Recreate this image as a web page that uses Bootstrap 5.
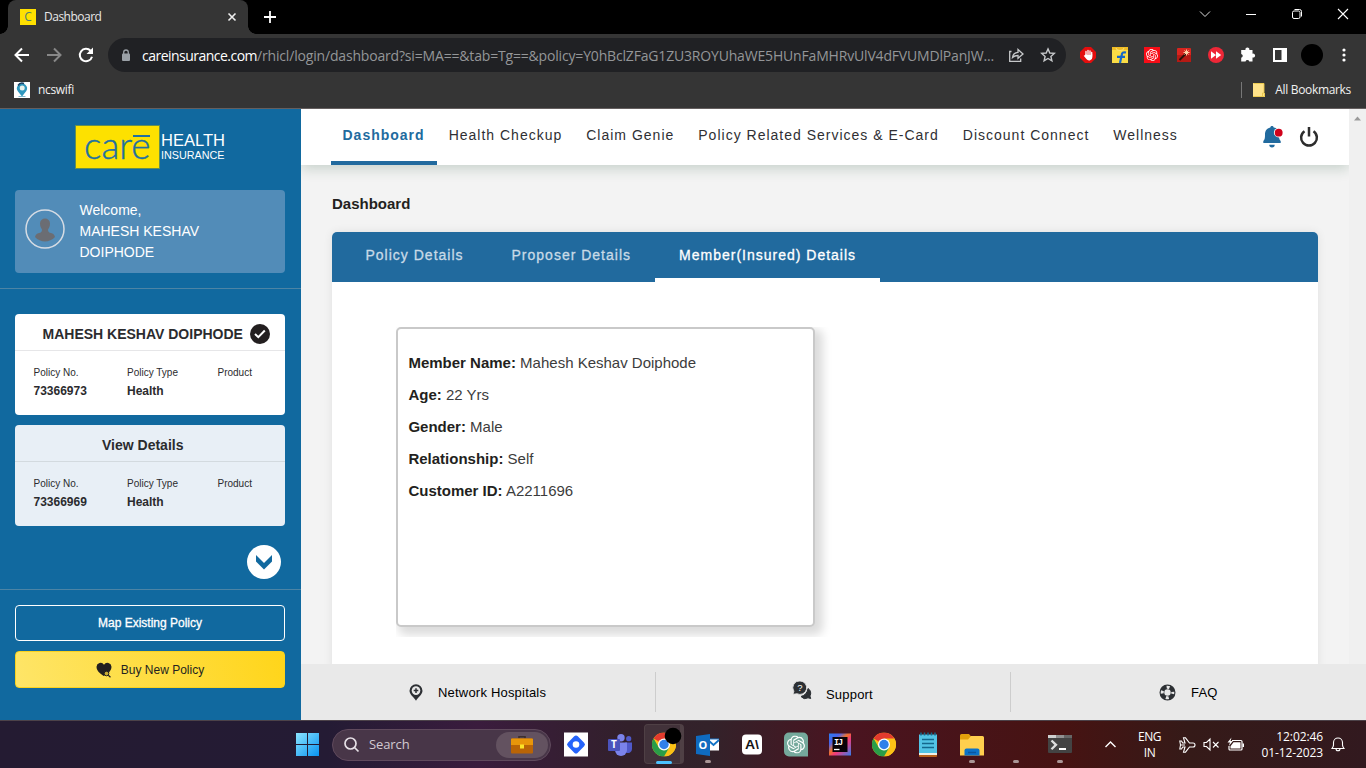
<!DOCTYPE html>
<html lang="en">
<head>
<meta charset="utf-8">
<meta name="viewport" content="width=device-width, initial-scale=1">
<title>Dashboard</title>
<link href="https://cdn.jsdelivr.net/npm/bootstrap@5.3.0/dist/css/bootstrap.min.css" rel="stylesheet">
<style>
  :root { --care-blue:#11699f; --care-nav:#216a9e; --ui:"Open Sans","Noto Sans",sans-serif; --web:"Liberation Sans",Arial,sans-serif; }
  body { height:768px; width:1366px; overflow:hidden; font-family:var(--web); font-size:14px; color:#231f20; white-space:nowrap; }
  svg { display:block; flex:none; overflow:visible; }
  .ui-font { font-family:var(--ui); }

  /* browser chrome */
  .tabstrip { height:34px; background:#000; padding-left:8px; }
  .browser-tab { width:240px; background:#353535; border-radius:8px 8px 0 0; padding:0 11px 0 12px; color:#e8e8e8; font-size:12px; letter-spacing:-.5px; position:relative; }
  .browser-tab::before, .browser-tab::after { content:""; position:absolute; bottom:0; width:8px; height:8px; }
  .browser-tab::before { left:-8px; background:radial-gradient(circle at 0 0,#000 7.5px,#353535 8px); }
  .browser-tab::after { right:-8px; background:radial-gradient(circle at 100% 0,#000 7.5px,#353535 8px); }
  .toolbar { height:42px; background:#353535; padding:4px 11px 4px 14px; }
  .omnibox { width:958px; height:34px; border-radius:17px; background:#202124; padding:0 11px 0 13px; margin-left:14px; font-size:14px; color:#949698; }
  .omnibox .host { color:#fff; letter-spacing:-.52px; }
  .omnibox .path { letter-spacing:-.175px; }
  .bookmarks { height:33px; background:#353535; border-bottom:1px solid #655f5f; color:#f1f1f1; font-size:12px; padding:0 15px 4px 14px; letter-spacing:-.33px; }

  /* page */
  .page { height:611px; }
  .side { width:301px; background:var(--care-blue); color:#fff; }
  .side-pad { padding:0 16px 0 15px; }
  .logo-wrap { padding:16px 0 22px 75px; }
  .welcome { height:83px; border-radius:4px; background:#528cb8; padding-left:10px; line-height:21px; gap:14.5px; }
  .rule { height:1px; background:#4c84a5; }
  .policy { height:101px; border-radius:4px; background:#fff; color:#2b2b2e; }
  .policy.alt { background:#e8eff6; }
  .policy-head { height:37px; border-bottom:1px solid #e6e6e8; font-weight:700; padding-top:3px; }
  .policy-head span { padding-top:1px; }
  .alt .policy-head { border-color:#d3dadf; }
  .policy-body { padding:14px 0 0 18.5px; font-size:10px; line-height:15px; }
  .policy-body b { display:block; font-size:12px; line-height:23px; }
  .c1 { width:93.5px; } .c2 { width:90.5px; }
  .side-btn { height:36px; border:1px solid #fff; border-radius:4px; font-size:12px; color:#fff; }
  .map-btn { -webkit-text-stroke:.3px #fff; }
  .buy-btn { height:37px; border-color:#fbd21c; background:linear-gradient(75deg,#fee568,#ffd51a); color:#231f20; gap:9px; }

  .content-col { width:1065px; background:#f3f3f3; }
  .view { height:555px; }
  .scroller { width:1048px; overflow:hidden; }
  .sbar { width:17px; background:#f0f0f0; padding-top:7px; }
  .topnav { height:56px; background:#fff; box-shadow:0 4px 12px rgba(30,80,50,.2); padding:0 30px 0 29.5px; letter-spacing:1px; position:relative; clip-path:inset(0 0 -20px 0); }
  .topnav .top-link { color:#2f2f33; text-decoration:none; padding:15px 12px 0 12px; line-height:22px; height:56px; }
  .topnav .top-link.on { color:var(--care-nav); font-weight:700; border-bottom:4px solid var(--care-nav); }
  .page-title { font-size:15px; font-weight:700; line-height:22px; margin:28px 0 17px 31px; }
  .panel { width:986px; margin-left:31px; height:440px; background:#fff; border-radius:5px 5px 0 0; box-shadow:0 0 10px rgba(0,0,0,.08); }
  .panel-tabs { height:50px; background:var(--care-nav); border-radius:5px 5px 0 0; padding-left:9.5px; letter-spacing:1px; }
  .panel-tabs .tab-link { color:#c8dae7; text-decoration:none; padding:11px 24px 0; line-height:24px; height:50px; -webkit-text-stroke:.3px currentColor; }
  .panel-tabs .tab-link.on { color:#fff; border-bottom:4px solid #fff; }
  .member-wrap { margin:45px 0 0 64px; width:440px; height:310px; overflow:hidden; }
  .member { width:419px; height:300px; border:2px solid #c9c9c9; border-radius:5px; box-shadow:5px 5px 10px 3px #dcdcdc; background:#fff; padding:18px 10.4px; font-size:15px; line-height:32px; color:#3c3c3c; }
  .member b { color:#231f20; }
  .foot { height:56px; background:#e9e9e9; color:#000; font-size:13px; letter-spacing:.2px; }
  .foot span { padding-top:1px; }
  .foot > div { width:355px; height:40px; }
  .foot > div:first-child { width:354px; }
  .foot > div + div { border-left:1px solid #cdcdcd; }

  /* desktop taskbar */
  .taskbar { height:48px; border-top:1px solid #4c4249; background:linear-gradient(90deg,#241b32 0,#241b34 24%,#3a1c3d 35%,#32202b 46%,#33222a 52%,#4a1420 62%,#461312 78%,#351a18 87%,#32191f 100%); color:#fff; padding-left:295px; }
  .search { width:219px; height:32px; border-radius:16px; background:#483648; border:1px solid #604a5d; color:#d2cad2; font-size:13px; padding-left:11px; margin:0 3px 0 12px; letter-spacing:-.1px; }
  .search-art { width:52px; height:26px; border-radius:13px; background:#635260; margin-right:2px; }
  .slot { width:44px; height:47px; position:relative; }
  .slot.dot::after { content:""; position:absolute; left:19px; bottom:5px; width:6px; height:3px; border-radius:2px; background:#aa9696; }
  .slot.active::before { content:""; position:absolute; left:2px; top:3px; width:40px; height:40px; border-radius:4px; background:#42323a; border:1px solid #4f4045; border-right-width:4px; }
  .slot.active::after { content:""; position:absolute; left:14px; bottom:4px; width:16px; height:3px; border-radius:2px; background:#4cc2ff; }
  .slot svg { position:relative; }
  .tray { font-size:12px; line-height:16px; letter-spacing:-.1px; }
</style>
</head>
<body class="d-flex flex-column m-0">

<svg width="0" height="0" class="position-absolute" aria-hidden="true">
  <symbol id="chrome" viewBox="0 0 24 24">
    <circle cx="12" cy="12" r="12" fill="#fbc116"/>
    <path d="M12 12 1.6 6A12 12 0 0 1 22.4 6z" fill="#e33b2e"/>
    <path d="M22.4 6A12 12 0 0 1 12 24l5.2-9L12 6z" fill="#fbc116"/>
    <path d="M1.6 6A12 12 0 0 0 12 24l5.2-9L12 12 6.8 15z" fill="#2a9d48"/>
    <circle cx="12" cy="12" r="6" fill="#fff"/><circle cx="12" cy="12" r="4.7" fill="#3080ea"/>
  </symbol>
  <symbol id="knot" viewBox="0 0 24 24">
    <path d="M22.2819 9.8211a5.9847 5.9847 0 0 0-.5157-4.9108 6.0462 6.0462 0 0 0-6.5098-2.9A6.0651 6.0651 0 0 0 4.9807 4.1818a5.9847 5.9847 0 0 0-3.9977 2.9 6.0462 6.0462 0 0 0 .7427 7.0966 5.98 5.98 0 0 0 .511 4.9107 6.051 6.051 0 0 0 6.5146 2.9001A5.9847 5.9847 0 0 0 13.2599 24a6.0557 6.0557 0 0 0 5.7718-4.2058 5.9894 5.9894 0 0 0 3.9977-2.9001 6.0557 6.0557 0 0 0-.7475-7.0729zm-9.022 12.6081a4.4755 4.4755 0 0 1-2.8764-1.0408l.1419-.0804 4.7783-2.7582a.7948.7948 0 0 0 .3927-.6813v-6.7369l2.02 1.1686a.071.071 0 0 1 .038.052v5.5826a4.504 4.504 0 0 1-4.4945 4.4944zm-9.6607-4.1254a4.4708 4.4708 0 0 1-.5346-3.0137l.142.0852 4.783 2.7582a.7712.7712 0 0 0 .7806 0l5.8428-3.3685v2.3324a.0804.0804 0 0 1-.0332.0615L9.74 19.9502a4.4992 4.4992 0 0 1-6.1408-1.6464zM2.3408 7.8956a4.485 4.485 0 0 1 2.3655-1.9728V11.6a.7664.7664 0 0 0 .3879.6765l5.8144 3.3543-2.0201 1.1685a.0757.0757 0 0 1-.071 0l-4.8303-2.7865A4.504 4.504 0 0 1 2.3408 7.872zm16.5963 3.8558L13.1038 8.364 15.1192 7.2a.0757.0757 0 0 1 .071 0l4.8303 2.7913a4.4944 4.4944 0 0 1-.6765 8.1042v-5.6772a.79.79 0 0 0-.407-.667zm2.0107-3.0231l-.142-.0852-4.7735-2.7818a.7759.7759 0 0 0-.7854 0L9.409 9.2297V6.8974a.0662.0662 0 0 1 .0284-.0615l4.8303-2.7866a4.4992 4.4992 0 0 1 6.6802 4.66zM8.3065 12.863l-2.02-1.1638a.0804.0804 0 0 1-.038-.0567V6.0742a4.4992 4.4992 0 0 1 7.3757-3.4537l-.142.0805L8.704 5.459a.7948.7948 0 0 0-.3927.6813zm1.0976-2.3654l2.602-1.4998 2.6069 1.4998v2.9994l-2.5974 1.4997-2.6067-1.4997Z"/>
  </symbol>
</svg>

<!-- Browser window -->
<div class="ui-font">
  <div class="tabstrip d-flex">
    <div class="browser-tab d-flex align-items-center">
      <svg width="16" height="16"><rect width="16" height="16" fill="#ffe000"/><text x="8" y="12.3" text-anchor="middle" font-size="12" letter-spacing="0" fill="#4f7d72" font-family="Open Sans">C</text></svg>
      <span class="ms-2">Dashboard</span>
      <svg class="ms-auto" width="10" height="10" stroke="#eee" stroke-width="1.6"><path d="M1.5 1.5l7 7M8.500 1.500l-7 7"/></svg>
    </div>
    <svg width="12" height="12" style="margin:11px 0 0 16px" stroke="#fff" stroke-width="1.8"><path d="M6 0v12M0 6h12"/></svg>
    <div class="ms-auto d-flex align-items-center" style="gap:36px;padding:0 18px 6px 0">
      <svg width="10" height="10" fill="none" stroke="#ddd"><path d="M0 2.500l5 5 5-5"/></svg>
      <svg width="10" height="10" stroke="#fff"><path d="M0 5.500h10"/></svg>
      <svg width="10" height="10" fill="none" stroke="#fff"><rect x=".5" y="2" width="7.500" height="7.500" rx="1.500"/><path d="M2.500.500H7.500a2 2 0 0 1 2 2V7.500"/></svg>
      <svg width="10" height="10" stroke="#fff" stroke-width="1.100"><path d="M0 0l10 10M10 0L0 10"/></svg>
    </div>
  </div>
  <div class="toolbar d-flex align-items-center">
    <div class="d-flex" style="gap:16px;width:80px">
      <svg width="16" height="16" fill="none" stroke="#fff" stroke-width="2"><path d="M15 8H2M8 1.500L1.500 8 8 14.500"/></svg>
      <svg width="16" height="16" fill="none" stroke="#888" stroke-width="2"><path d="M1 8h13M8 1.500L14.500 8 8 14.500"/></svg>
      <svg width="16" height="16" fill="none"><path d="M12.600 3.800A6.200 6.200 0 1 0 14 9.700" stroke="#fff" stroke-width="2"/><path d="M15 .500V7H8.500z" fill="#fff"/></svg>
    </div>
    <div class="omnibox d-flex align-items-center">
      <svg width="10" height="13"><rect x="1" y="4.500" width="8" height="7.500" rx="1" fill="#9aa0a6"/><path d="M2.700 5V3.300a2.300 2.300 0 0 1 4.600 0V5" fill="none" stroke="#9aa0a6" stroke-width="1.300"/></svg>
      <span style="margin-left:11px"><span class="host">careinsurance.com</span><span class="path">/rhicl/login/dashboard?si=MA==&amp;tab=Tg==&amp;policy=Y0hBclZFaG1ZU3ROYUhaWE5HUnFaMHRvUlV4dFVUMDlPanJW...</span></span>
      <div class="ms-auto d-flex align-items-center" style="gap:17px">
        <svg width="15" height="14" fill="none" stroke="#c6c8ca" stroke-width="1.300"><path d="M2.500 3.500H.700v9.800h11V10.500M3.500 9.500C4 6 6 4.500 9 4.300V1.500l5 4.500-5 4.300V7.500C6.800 7.500 5 8 3.500 9.500z"/></svg>
        <svg width="14" height="14" fill="none" stroke="#c6c8ca" stroke-width="1.400"><path d="M7 .900l1.800 4.100 4.500.400-3.400 3 1 4.400L7 10.500l-3.900 2.300 1-4.400-3.400-3 4.500-.400z"/></svg>
      </div>
    </div>
    <div class="d-flex align-items-center" style="gap:16px;margin-left:14px">
      <svg width="16" height="16"><path d="M5 0h6l5 5v6l-5 5H5l-5-5V5z" fill="#e40d0d"/><path d="M6 8V4.500M8 7V3.300M10 7V4M11.700 8V5.500" stroke="#fff" stroke-width="1.300" stroke-linecap="round"/><path d="M5.400 7.500h7v2.500a3.300 3.300 0 0 1-6 2L3.700 8.800l1-.500z" fill="#fff"/></svg>
      <svg width="16" height="16"><rect width="16" height="16" fill="#fbdd45"/><path d="M0 0h16v3H0z" fill="#f1bd25"/><path d="M4 1a4 2.500 0 0 0 8 0" fill="none" stroke="#f9e17b"/><path d="M14 5.500c-3-.700-4 .300-4.300 2.500L8 16M5 9.800h8" fill="none" stroke="#1567c8" stroke-width="2.200"/></svg>
      <svg width="16" height="16"><rect width="16" height="16" fill="#f70d17"/><use href="#knot" x="2" y="2" width="12" height="12" fill="#fff"/></svg>
      <svg width="16" height="16"><rect x="1" y="1" width="14" height="14" rx="1" fill="#d8251f"/><path d="M1 8h14v7H1z" fill="#b51a14"/><path d="M3.500 13l6-6" stroke="#2a1208" stroke-width="2"/><path d="M10.500 2.500v6M7.500 5.500h6M8.500 3.500l4 4M12.500 3.500l-4 4" stroke="#ffe0b0" stroke-width=".900"/></svg>
      <svg width="16" height="16"><circle cx="8" cy="8" r="8" fill="#ee2737"/><path d="M3 4.300L8 8l-5 3.700zM8 4.300L13.200 8 8 11.700z" fill="#fff"/></svg>
      <svg width="16" height="16"><path d="M2 3h3.500a2 2 0 1 1 3.800 0H12.500V6.700a2 2 0 1 1 0 3.800V14.500H9.300a2 2 0 0 0-3.800 0H1.200V10.800a2 2 0 0 0 0-3.900V3z" fill="#fff"/></svg>
      <svg width="16" height="16"><path d="M1 1h14v14H1zM3 3v10h6.500V3z" fill="#fff" fill-rule="evenodd"/></svg>
    </div>
    <svg width="22" height="22" style="margin-left:13px"><circle cx="11" cy="11" r="11"/></svg>
    <svg width="4" height="16" style="margin-left:19px" fill="#fff"><circle cx="2" cy="3" r="1.600"/><circle cx="2" cy="8" r="1.600"/><circle cx="2" cy="13" r="1.600"/></svg>
  </div>
  <div class="bookmarks d-flex align-items-center">
    <svg width="16" height="16"><rect width="16" height="16" fill="#fff"/><path d="M8 14.500L4 9.500a5 5 0 1 1 8.300-.500z" fill="#2f97bd"/><circle cx="8.200" cy="6" r="2.500" fill="#e8f3ee"/><path d="M4 3.500a5 5 0 0 1 6-2" stroke="#173f63" stroke-width="1.500" fill="none"/><path d="M4.500 14.500h7" stroke="#7db8cc"/></svg>
    <span style="margin-left:8px">ncswifi</span>
    <div class="ms-auto d-flex align-items-center">
      <span style="width:1px;height:16px;background:#777"></span>
      <svg width="12" height="14" style="margin:0 10px 0 11px"><path d="M0 0h11v10h1v4H0z" fill="#ffe38a"/><path d="M.500.500h10.500v9M11.500 10v3.500H0M9.500 13v-3h2" fill="none" stroke="#e9c74a" stroke-width=".900"/></svg>
      <span>All Bookmarks</span>
    </div>
  </div>
</div>

<!-- Page -->
<div class="page d-flex">
  <aside class="side">
    <div class="logo-wrap">
      <svg width="152" height="43">
        <rect x=".5" y=".5" width="84" height="43" fill="#fde100" stroke="#648f52"/>
        <text x="9" y="34" font-family="Lato" font-weight="300" font-size="38" textLength="66.500" lengthAdjust="spacingAndGlyphs" fill="#2270a0" stroke="#2270a0" stroke-width=".4">care</text>
        <path d="M58 11h17" stroke="#2270a0" stroke-width="2"/>
        <g fill="#fff" font-family="Liberation Sans">
          <text x="86" y="21" font-size="16.500" textLength="64" lengthAdjust="spacingAndGlyphs">HEALTH</text>
          <text x="86" y="33.500" font-size="11" textLength="63.500" lengthAdjust="spacingAndGlyphs">INSURANCE</text>
        </g>
      </svg>
    </div>
    <div class="side-pad">
      <div class="welcome d-flex align-items-center">
        <svg width="40" height="40" style="margin-top:-5px"><circle cx="20" cy="20" r="19" fill="none" stroke="#d6dce4" stroke-width="1.500"/><path d="M15 14.500a5 5 0 0 1 10 0c0 3-1 4.500-2 6 0 2.500 1 3 3 3.600 2 .700 3.500 1.500 4 4-2.500 3-6.500 4.400-10 4.400s-7.500-1.400-10-4.400c.500-2.500 2-3.300 4-4 2-.600 3-1.100 3-3.600-1-1.500-2-3-2-6z" fill="#6b6d73"/></svg>
        <div>Welcome,<br>MAHESH KESHAV<br>DOIPHODE</div>
      </div>
    </div>
    <div class="rule" style="margin:15px 0 25px"></div>
    <div class="side-pad d-flex flex-column" style="gap:10px">
      <div class="policy">
        <div class="policy-head d-flex align-items-center" style="padding-left:27.500px"><span>MAHESH KESHAV DOIPHODE</span>
          <svg width="20" height="20" style="margin-left:7px"><circle cx="10" cy="10" r="10" fill="#231f20"/><path d="M5 10l3.300 3.200L14.800 6.500" fill="none" stroke="#fff" stroke-width="2"/></svg></div>
        <div class="policy-body d-flex"><div class="c1">Policy No.<b>73366973</b></div><div class="c2">Policy Type<b>Health</b></div><div>Product</div></div>
      </div>
      <div class="policy alt">
        <div class="policy-head d-flex align-items-center" style="padding-left:87px"><span>View Details</span></div>
        <div class="policy-body d-flex"><div class="c1">Policy No.<b>73366969</b></div><div class="c2">Policy Type<b>Health</b></div><div>Product</div></div>
      </div>
    </div>
    <svg width="34" height="34" style="margin:19px 0 10px 247px"><circle cx="17" cy="17" r="17" fill="#fff"/><path d="M9 10l8 8 8-8v6.500L17 24.500 9 16.500z" fill="#11699f"/></svg>
    <div class="rule"></div>
    <div class="side-pad d-flex flex-column" style="gap:10px;padding-top:15px">
      <div class="side-btn map-btn d-flex align-items-center justify-content-center">Map Existing Policy</div>
      <div class="side-btn buy-btn d-flex align-items-center justify-content-center">
        <svg width="16" height="16"><path d="M7.700 14C4 11.500.500 8.500.500 4.700A4.100 4.100 0 0 1 8 2.700a4.100 4.100 0 0 1 7.500 2c0 2-1 4-2.500 5.700z" fill="#231f20"/><circle cx="10.500" cy="11.500" r="2.300" fill="#c9ad35" stroke="#231f20"/><path d="M12.300 13.200l2.200 2" stroke="#231f20" stroke-width="1.200"/></svg>
        Buy New Policy</div>
    </div>
  </aside>

  <div class="content-col">
    <div class="view d-flex">
      <main class="scroller">
        <nav class="topnav d-flex">
          <a class="top-link on">Dashboard</a><a class="top-link">Health Checkup</a><a class="top-link">Claim Genie</a><a class="top-link">Policy Related Services &amp; E-Card</a><a class="top-link">Discount Connect</a><a class="top-link">Wellness</a>
          <svg class="ms-auto" width="20" height="22" style="margin-top:17px"><path d="M10 0c1 0 1.500.600 1.700 1.400C15.500 2 17 5 17 8.500c0 3 0 4.700 1.700 6.500v2H1.300v-2C3 13.200 3 11.500 3 8.500 3 5 4.500 2.200 8.300 1.400 8.500.600 9 0 10 0zM7.300 18.800h5.400a2.700 2.700 0 0 1-5.400 0z" fill="#216a9e"/><circle cx="16.700" cy="6.700" r="4.800" fill="#fff"/><circle cx="16.700" cy="6.700" r="3.900" fill="#d0021b"/></svg>
          <svg width="20" height="22" style="margin:18px 0 0 17px" fill="none" stroke="#2d2d2d" stroke-width="2.500"><path d="M5.500 4.200A7.900 7.900 0 1 0 14.500 4.200M10 0v9.500"/></svg>
        </nav>
        <h1 class="page-title">Dashboard</h1>
        <section class="panel">
          <div class="panel-tabs d-flex"><a class="tab-link">Policy Details</a><a class="tab-link">Proposer Details</a><a class="tab-link on">Member(Insured) Details</a></div>
          <div class="member-wrap"><div class="member">
            <div><b>Member Name:</b> Mahesh Keshav Doiphode</div>
            <div><b>Age:</b> 22 Yrs</div>
            <div><b>Gender:</b> Male</div>
            <div><b>Relationship:</b> Self</div>
            <div><b>Customer ID:</b> A2211696</div>
          </div></div>
        </section>
      </main>
      <div class="sbar"><svg width="17" height="5"><path d="M5 4.500L8.500.500 12 4.500z" fill="#999"/></svg></div>
    </div>
    <footer class="foot d-flex align-items-center">
      <div class="d-flex align-items-center" style="padding-left:108px;gap:15px">
        <svg width="14" height="17"><path d="M7 .300a6.500 6.500 0 0 1 6.500 6.500C13.500 10.500 9.500 13 7 16.700 4.500 13 .500 10.500.500 6.800A6.500 6.500 0 0 1 7 .300z" fill="#2d3034"/><circle cx="7" cy="6.600" r="4.300" fill="#e9e9e9"/><path d="M7 4.300v4.600M4.700 6.600h4.600" stroke="#2d3034" stroke-width="1.500"/></svg>
        <span>Network Hospitals</span>
      </div>
      <div class="d-flex align-items-center" style="padding-left:137px;gap:15px">
        <svg width="18" height="18" style="margin-top:-4px"><path d="M8 15.500a5.500 5.500 0 0 0 7 1.300l2.700.700-.800-2.500A5.300 5.300 0 0 0 15 7.500c-.500 4-3 7-7 8z" fill="#2d3034" stroke="#2d3034"/><path d="M7 0a6.700 6.700 0 1 1-3 12.700L0 13.300l.900-3A6.700 6.700 0 0 1 7 0z" fill="#2d3034" stroke="#e9e9e9" stroke-width=".8"/><text x="7" y="10" text-anchor="middle" font-size="9.500" letter-spacing="0" fill="#fff" font-family="Liberation Sans">?</text></svg>
        <span style="padding-top:5px">Support</span>
      </div>
      <div class="d-flex align-items-center" style="padding-left:148px;gap:15px">
        <svg width="17" height="17" fill="none"><circle cx="8.500" cy="8.500" r="5.600" stroke="#2d3034" stroke-width="4.800"/><circle cx="8.500" cy="8.500" r="5.300" stroke="#e9e9e9" stroke-width="3" stroke-dasharray="3 5.325" stroke-dashoffset="1.500"/></svg>
        <span>FAQ</span>
      </div>
    </footer>
  </div>
</div>

<!-- Taskbar -->
<div class="taskbar d-flex align-items-center ui-font">
  <svg width="25" height="24"><defs><linearGradient id="w" x2="1" y2="1"><stop stop-color="#8be4ff"/><stop offset="1" stop-color="#0893f0"/></linearGradient></defs><path d="M1 0h11v11H1zM13 0h11v11H13zM1 12h11v11H1zM13 12h11v11H13z" fill="url(#w)"/></svg>
  <div class="search d-flex align-items-center">
    <svg width="15" height="15" fill="none" stroke="#e6e0e6" stroke-width="1.700"><circle cx="6.500" cy="6.500" r="5.500"/><path d="M10.500 10.500l4 4"/></svg>
    <span style="margin-left:10px">Search</span>
    <div class="search-art ms-auto d-flex align-items-center justify-content-center"><svg width="22" height="18"><path d="M8 2.500V.700h6v1.800" fill="none" stroke="#3c3030" stroke-width="1.600"/><rect y="2.500" width="22" height="15" rx="1" fill="#b96406"/><path d="M0 3.500a1 1 0 0 1 1-1h20a1 1 0 0 1 1 1V9H0z" fill="#e8960a"/><rect x="9" y="8.500" width="4" height="4" fill="#fbe428"/></svg></div>
  </div>
  <div class="slot d-flex align-items-center justify-content-center"><svg width="24" height="24"><rect y="-.5" width="24" height="24" fill="#fff"/><rect x="5" y="4.500" width="14" height="14" rx="2.500" transform="rotate(45 12 11.5)" fill="#2563fb"/><circle cx="12" cy="11.500" r="3.300" fill="#fff"/></svg></div>
  <div class="slot d-flex align-items-center justify-content-center"><svg width="24" height="22"><circle cx="13" cy="3.700" r="3.700" fill="#7b83eb"/><circle cx="20.700" cy="4.700" r="2.600" fill="#5059c9"/><path d="M17 8.500h7v6.500a4 4 0 0 1-6 3.500z" fill="#5059c9"/><path d="M7 8.500h12v7.500a6 6 0 0 1-12 0z" fill="#7b83eb"/><rect y="5" width="12" height="12" rx="1" fill="#4b53bc"/><text x="6" y="14.300" text-anchor="middle" font-size="10" font-weight="700" fill="#fff" font-family="Open Sans">T</text></svg></div>
  <div class="slot active d-flex align-items-center justify-content-center"><svg width="24" height="24"><use href="#chrome" y="-.5" width="24" height="24"/><circle cx="21" cy="3" r="8.300"/></svg></div>
  <div class="slot dot d-flex align-items-center justify-content-center"><svg width="24" height="22"><path d="M10 4.500h13V16H10z" fill="#1b76c9"/><path d="M12 5.500h11v11H12z" fill="#fff"/><path d="M12 6l5.500 5L23 6" fill="none" stroke="#1272c6" stroke-width="1.800"/><path d="M0 2L14 0v22L0 20z" fill="#0f6bc0"/><text x="7" y="15" text-anchor="middle" font-size="11" font-weight="700" fill="#fff" font-family="Open Sans">O</text></svg></div>
  <div class="slot d-flex align-items-center justify-content-center"><svg width="20" height="20"><rect y="-.5" width="20" height="20" rx="4" fill="#fff"/><text x="10" y="14.300" text-anchor="middle" font-size="13.500" font-weight="700" textLength="14" lengthAdjust="spacingAndGlyphs" fill="#151515" font-family="Liberation Sans">A\</text></svg></div>
  <div class="slot d-flex align-items-center justify-content-center"><svg width="24" height="24"><path d="M5-.500h14a5 5 0 0 1 5 5v19H5a5 5 0 0 1-5-5v-14a5 5 0 0 1 5-5z" fill="#75a99c"/><use href="#knot" x="3" y="2.500" width="18" height="18" fill="#fff"/></svg></div>
  <div class="slot d-flex align-items-center justify-content-center"><svg width="22" height="22"><defs><linearGradient id="ij" x2="1" y2="1"><stop stop-color="#2a7df0"/><stop offset=".25" stop-color="#4a62ea"/><stop offset=".45" stop-color="#f0722a"/><stop offset=".6" stop-color="#f23a7a"/><stop offset="1" stop-color="#2f7ff0"/></linearGradient></defs><rect y="-.5" width="22" height="22" fill="url(#ij)"/><rect x="3.500" y="3" width="15" height="15" fill="#080308"/><text x="5" y="10.500" font-size="8.500" font-weight="700" fill="#fff" font-family="Liberation Mono" textLength="9">IJ</text><path d="M5 15.500h5.500" stroke="#fff" stroke-width="1.300"/></svg></div>
  <div class="slot d-flex align-items-center justify-content-center"><svg width="24" height="24"><use href="#chrome" y="-.5" width="24" height="24"/></svg></div>
  <div class="slot d-flex align-items-center justify-content-center"><svg width="18" height="24"><rect y="21" width="18" height="3" rx="1" fill="#b7611c"/><rect y="20" width="18" height="2" fill="#f0f0e9"/><path d="M0 1.500h18V20H0z" fill="#52c3e5"/><path d="M2-.500v3M5.500-.500v3M9-.500v3M12.500-.500v3M16-.500v3" stroke="#126b8d" stroke-width="1.500"/><path d="M3 6.500h12M3 10.500h12M3 14.500h12" stroke="#14678d" stroke-width="1.500"/></svg></div>
  <div class="slot dot d-flex align-items-center justify-content-center"><svg width="24" height="22"><path d="M0 1.500A1.500 1.500 0 0 1 1.500 0H9l2.500 3L8 7H0z" fill="#e2a00c"/><path d="M0 5.500h8L11 2h11.500A1.500 1.500 0 0 1 24 3.500V21.500H0z" fill="#ffcf4e"/><path d="M4.500 21.500v-5a2 2 0 0 1 2-2h11a2 2 0 0 1 2 2v5z" fill="#0c72c7"/><path d="M8 18.500h8" stroke="#0a559d" stroke-width="1.500"/></svg></div>
  <div class="slot dot"></div>
  <div class="slot dot d-flex align-items-center justify-content-center"><svg width="24" height="19"><rect width="24" height="18" rx="1" fill="#434343"/><path d="M0 0h8v3H0z" fill="#cfcfcf"/><path d="M8 0h8v3H8z" fill="#919191"/><path d="M16 0h8v3h-8z" fill="#666"/><path d="M3.500 5.500L8 9.800l-4.500 4.500" fill="none" stroke="#ddd" stroke-width="2.300"/><path d="M11 14h7" stroke="#fff" stroke-width="2"/></svg></div>
  <div class="tray d-flex align-items-center ms-auto" style="padding-right:21px">
    <svg width="11" height="7" fill="none" stroke="#fff" stroke-width="1.400"><path d="M.500 6l5-5 5 5"/></svg>
    <div class="text-center" style="width:25px;margin:0 17px 0 21px;letter-spacing:-.5px">ENG<br>IN</div>
    <svg width="17" height="16" fill="none" stroke="#fff" stroke-width="1.100"><path d="M6 6L4.500.800H6.500L10.500 6H14a2 2 0 0 1 0 4H10.500L6.500 15.200H4.500L6 10H3.700L2.500 12H.800L1.500 8 .800 4H2.500l1.200 2zM2 8h4"/></svg>
    <svg width="17" height="13" style="margin-left:7px" fill="none" stroke="#fff" stroke-width="1.100"><path d="M1 4.500h2.500L7 1v11L3.500 8.500H1zM10 4l5.500 5.500M15.500 4L10 9.500"/></svg>
    <svg width="17" height="13" style="margin-left:7px"><path d="M5 2.500h9a1 1 0 0 1 1 1v7.500a1 1 0 0 1-1 1H3a1 1 0 0 1-1-1V8" fill="none" stroke="#fff" stroke-width="1.200"/><path d="M6.500 4.200h7V10.500H3.500V8.300zM15.500 5.500h1.500v3.500h-1.500zM4.500-.500L.500 4.500H3L1.800 8 6 3H3.500z" fill="#fff"/></svg>
    <div class="text-end" style="width:79px">12:02:46<br>01-12-2023</div>
    <svg width="14" height="15" style="margin-left:8px" fill="none" stroke="#fff" stroke-width="1.100"><path d="M1 11.500c1-1.300 1.500-2 1.500-3.500V5.500a4.500 4.500 0 0 1 9 0V8c0 1.500.500 2.200 1.500 3.500zM5 11.800a2 2 0 0 0 4 0"/></svg>
  </div>
</div>

<script src="https://cdn.jsdelivr.net/npm/bootstrap@5.3.0/dist/js/bootstrap.bundle.min.js"></script>
</body>
</html>
